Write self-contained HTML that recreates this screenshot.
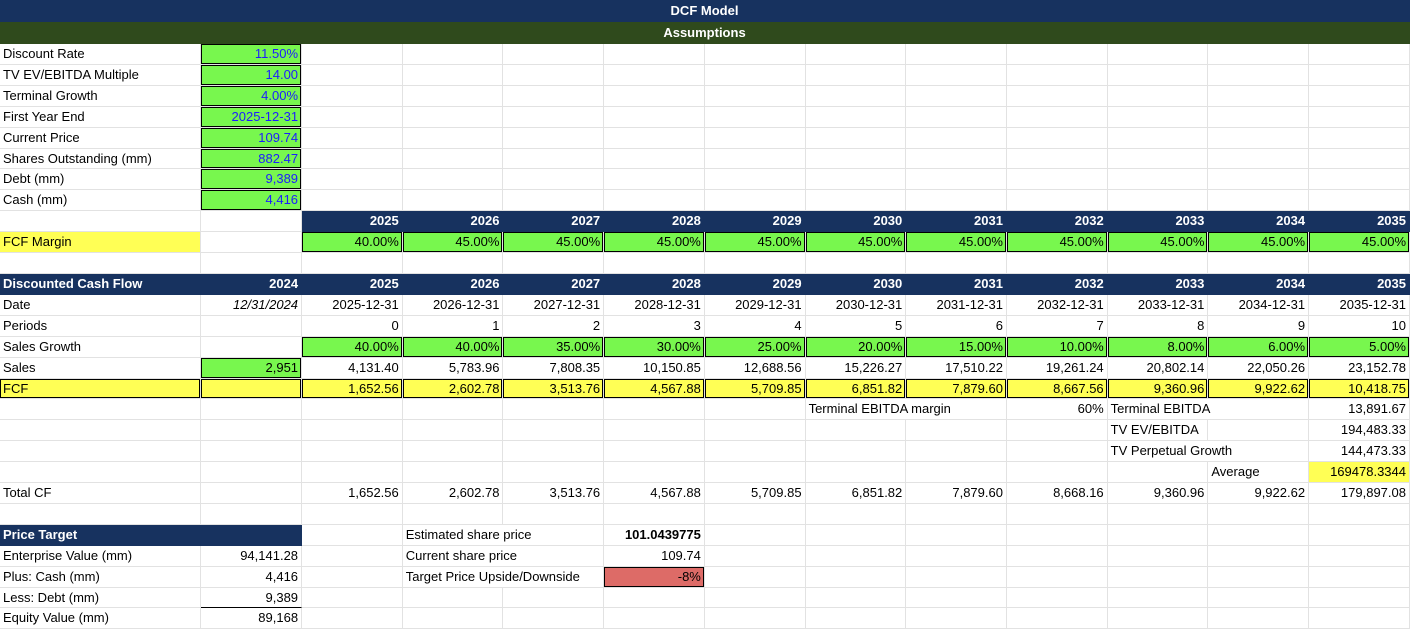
<!DOCTYPE html>
<html><head><meta charset="utf-8"><style>
body{margin:0;background:#fff;font-family:"Liberation Sans",Arial,sans-serif;font-size:13px;color:#000}
table{border-collapse:separate;border-spacing:0;table-layout:fixed;width:1410px}
td{height:19.92px;padding:0 3px;border-right:1px solid #e2e2e2;border-bottom:1px solid #e2e2e2;white-space:nowrap;overflow:visible;line-height:19.9px}
tr.t td{height:20.5px;line-height:21px}
.r{text-align:right}.c{text-align:center}.b{font-weight:bold}
.nv{background:#17325f;color:#fff;font-weight:bold;border-color:#17325f}
.dg{background:#2f4a1c;color:#fff;font-weight:bold;border-color:#2f4a1c}
.g{background:#78f74e;box-shadow:inset 0 0 0 1px #000}
.gb{background:#78f74e;box-shadow:inset 0 0 0 1px #000;color:#1c1cff;text-align:right}
.y{background:#ffff55}
.yb{background:#ffff55;box-shadow:inset 0 0 0 1px #000}
.rd{background:#dd6b67;box-shadow:inset 0 0 0 1px #000;text-align:right}
</style></head><body>
<table>
<colgroup><col style="width:201px"><col style="width:101px"><col span="11" style="width:100.7px"></colgroup>
<tr class="t"><td colspan="13" class="nv c">DCF Model</td></tr>
<tr class="t"><td colspan="13" class="dg c">Assumptions</td></tr>
<tr><td>Discount Rate</td><td class="gb">11.50%</td><td></td><td></td><td></td><td></td><td></td><td></td><td></td><td></td><td></td><td></td><td></td></tr>
<tr><td>TV EV/EBITDA Multiple</td><td class="gb">14.00</td><td></td><td></td><td></td><td></td><td></td><td></td><td></td><td></td><td></td><td></td><td></td></tr>
<tr><td>Terminal Growth</td><td class="gb">4.00%</td><td></td><td></td><td></td><td></td><td></td><td></td><td></td><td></td><td></td><td></td><td></td></tr>
<tr><td>First Year End</td><td class="gb">2025-12-31</td><td></td><td></td><td></td><td></td><td></td><td></td><td></td><td></td><td></td><td></td><td></td></tr>
<tr><td>Current Price</td><td class="gb">109.74</td><td></td><td></td><td></td><td></td><td></td><td></td><td></td><td></td><td></td><td></td><td></td></tr>
<tr><td>Shares Outstanding (mm)</td><td class="gb">882.47</td><td></td><td></td><td></td><td></td><td></td><td></td><td></td><td></td><td></td><td></td><td></td></tr>
<tr><td>Debt (mm)</td><td class="gb">9,389</td><td></td><td></td><td></td><td></td><td></td><td></td><td></td><td></td><td></td><td></td><td></td></tr>
<tr><td>Cash (mm)</td><td class="gb">4,416</td><td></td><td></td><td></td><td></td><td></td><td></td><td></td><td></td><td></td><td></td><td></td></tr>
<tr><td></td><td></td><td class="nv r">2025</td><td class="nv r">2026</td><td class="nv r">2027</td><td class="nv r">2028</td><td class="nv r">2029</td><td class="nv r">2030</td><td class="nv r">2031</td><td class="nv r">2032</td><td class="nv r">2033</td><td class="nv r">2034</td><td class="nv r">2035</td></tr>
<tr><td class="y">FCF Margin</td><td></td><td class="g r">40.00%</td><td class="g r">45.00%</td><td class="g r">45.00%</td><td class="g r">45.00%</td><td class="g r">45.00%</td><td class="g r">45.00%</td><td class="g r">45.00%</td><td class="g r">45.00%</td><td class="g r">45.00%</td><td class="g r">45.00%</td><td class="g r">45.00%</td></tr>
<tr><td></td><td></td><td></td><td></td><td></td><td></td><td></td><td></td><td></td><td></td><td></td><td></td><td></td></tr>
<tr><td class="nv">Discounted Cash Flow</td><td class="nv r">2024</td><td class="nv r">2025</td><td class="nv r">2026</td><td class="nv r">2027</td><td class="nv r">2028</td><td class="nv r">2029</td><td class="nv r">2030</td><td class="nv r">2031</td><td class="nv r">2032</td><td class="nv r">2033</td><td class="nv r">2034</td><td class="nv r">2035</td></tr>
<tr><td>Date</td><td class="r"><i>12/31/2024</i></td><td class="r">2025-12-31</td><td class="r">2026-12-31</td><td class="r">2027-12-31</td><td class="r">2028-12-31</td><td class="r">2029-12-31</td><td class="r">2030-12-31</td><td class="r">2031-12-31</td><td class="r">2032-12-31</td><td class="r">2033-12-31</td><td class="r">2034-12-31</td><td class="r">2035-12-31</td></tr>
<tr><td>Periods</td><td></td><td class="r">0</td><td class="r">1</td><td class="r">2</td><td class="r">3</td><td class="r">4</td><td class="r">5</td><td class="r">6</td><td class="r">7</td><td class="r">8</td><td class="r">9</td><td class="r">10</td></tr>
<tr><td>Sales Growth</td><td></td><td class="g r">40.00%</td><td class="g r">40.00%</td><td class="g r">35.00%</td><td class="g r">30.00%</td><td class="g r">25.00%</td><td class="g r">20.00%</td><td class="g r">15.00%</td><td class="g r">10.00%</td><td class="g r">8.00%</td><td class="g r">6.00%</td><td class="g r">5.00%</td></tr>
<tr><td>Sales</td><td class="g r">2,951</td><td class="r">4,131.40</td><td class="r">5,783.96</td><td class="r">7,808.35</td><td class="r">10,150.85</td><td class="r">12,688.56</td><td class="r">15,226.27</td><td class="r">17,510.22</td><td class="r">19,261.24</td><td class="r">20,802.14</td><td class="r">22,050.26</td><td class="r">23,152.78</td></tr>
<tr><td class="yb">FCF</td><td class="yb"></td><td class="yb r">1,652.56</td><td class="yb r">2,602.78</td><td class="yb r">3,513.76</td><td class="yb r">4,567.88</td><td class="yb r">5,709.85</td><td class="yb r">6,851.82</td><td class="yb r">7,879.60</td><td class="yb r">8,667.56</td><td class="yb r">9,360.96</td><td class="yb r">9,922.62</td><td class="yb r">10,418.75</td></tr>
<tr><td></td><td></td><td></td><td></td><td></td><td></td><td></td><td colspan="2">Terminal EBITDA margin</td><td class="r">60%</td><td colspan="2">Terminal EBITDA</td><td class="r">13,891.67</td></tr>
<tr><td></td><td></td><td></td><td></td><td></td><td></td><td></td><td></td><td></td><td></td><td>TV EV/EBITDA</td><td></td><td class="r">194,483.33</td></tr>
<tr><td></td><td></td><td></td><td></td><td></td><td></td><td></td><td></td><td></td><td></td><td colspan="2">TV Perpetual Growth</td><td class="r">144,473.33</td></tr>
<tr><td></td><td></td><td></td><td></td><td></td><td></td><td></td><td></td><td></td><td></td><td></td><td>Average</td><td class="y r">169478.3344</td></tr>
<tr><td>Total CF</td><td></td><td class="r">1,652.56</td><td class="r">2,602.78</td><td class="r">3,513.76</td><td class="r">4,567.88</td><td class="r">5,709.85</td><td class="r">6,851.82</td><td class="r">7,879.60</td><td class="r">8,668.16</td><td class="r">9,360.96</td><td class="r">9,922.62</td><td class="r">179,897.08</td></tr>
<tr><td></td><td></td><td></td><td></td><td></td><td></td><td></td><td></td><td></td><td></td><td></td><td></td><td></td></tr>
<tr><td class="nv">Price Target</td><td class="nv"></td><td></td><td colspan="2">Estimated share price</td><td class="r b">101.0439775</td><td></td><td></td><td></td><td></td><td></td><td></td><td></td></tr>
<tr><td>Enterprise Value (mm)</td><td class="r">94,141.28</td><td></td><td colspan="2">Current share price</td><td class="r">109.74</td><td></td><td></td><td></td><td></td><td></td><td></td><td></td></tr>
<tr><td>Plus: Cash (mm)</td><td class="r">4,416</td><td></td><td colspan="2">Target Price Upside/Downside</td><td class="rd">-8%</td><td></td><td></td><td></td><td></td><td></td><td></td><td></td></tr>
<tr><td>Less: Debt (mm)</td><td class="r" style="border-bottom:1px solid #000">9,389</td><td></td><td></td><td></td><td></td><td></td><td></td><td></td><td></td><td></td><td></td><td></td></tr>
<tr><td>Equity Value (mm)</td><td class="r">89,168</td><td></td><td></td><td></td><td></td><td></td><td></td><td></td><td></td><td></td><td></td><td></td></tr>
</table>
</body></html>
